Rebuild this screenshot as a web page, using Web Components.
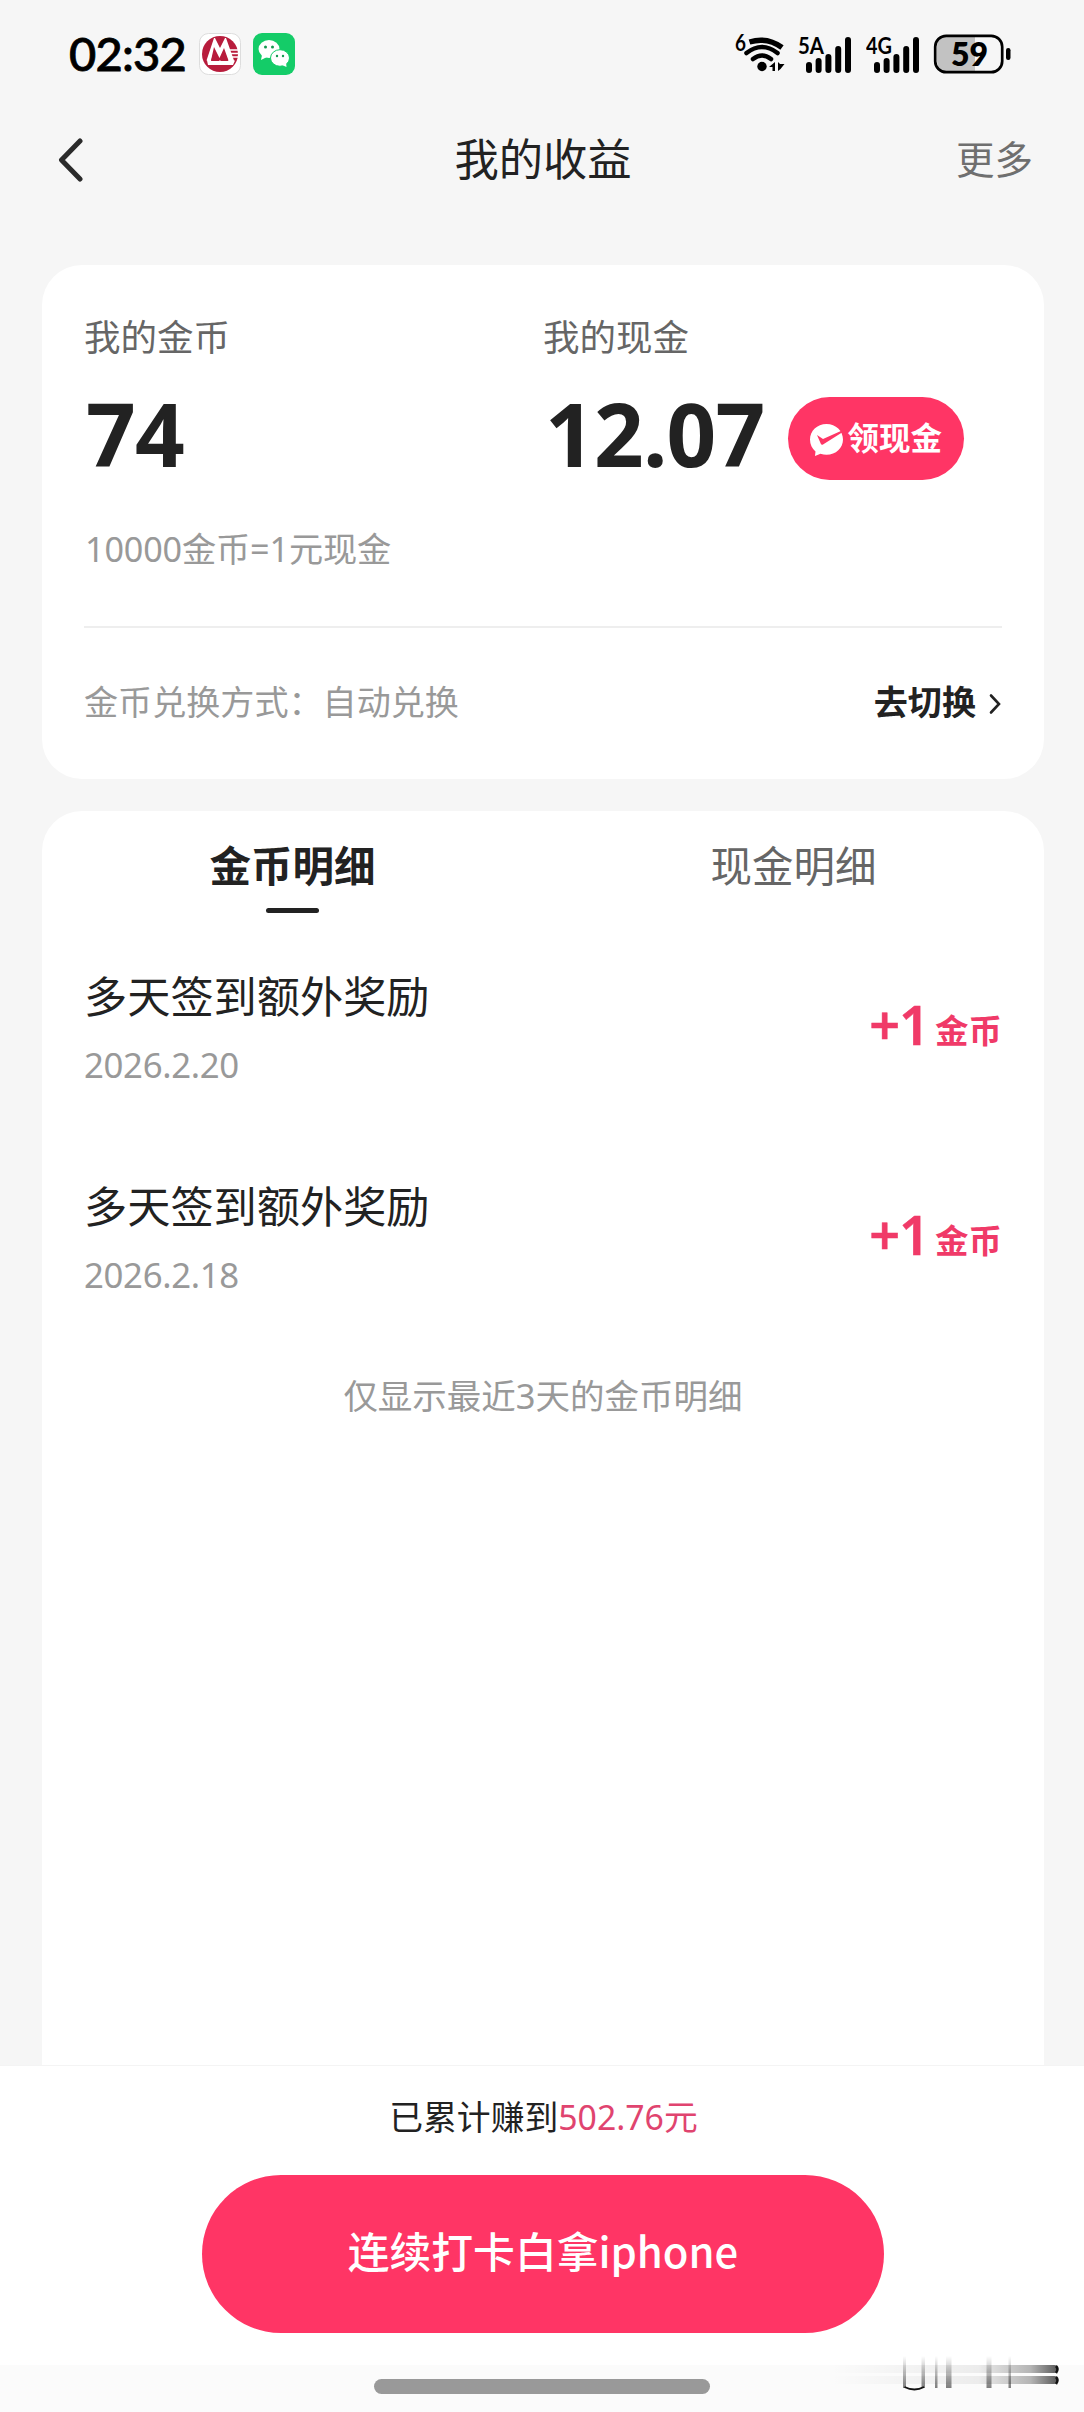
<!DOCTYPE html>
<html lang="zh-CN">
<head>
<meta charset="utf-8">
<title>我的收益</title>
<style>
  html, body { margin: 0; padding: 0; }
  body {
    width: 1084px;
    height: 2412px;
    overflow: hidden;
    background: #f6f6f6;
    color: #222;
    font-family: "Noto Sans", "Noto Sans CJK SC", sans-serif;
    --brand: #ff3565;
    --text-dim: #999;
  }
</style>
</head>
<body>
<earnings-page></earnings-page>

<script>
/** Small base: puts the element's template in an open shadow root. */
class BaseElement extends HTMLElement {
  constructor() {
    super();
    this.attachShadow({ mode: 'open' });
  }

  connectedCallback() {
    this.shadowRoot.innerHTML = this.template();
  }
}

/** SignalBars - network label with five rising bars. */
class SignalBars extends BaseElement {
  template() {
    const net = this.getAttribute('net') || '';
    return `
      <style>
        :host { display: block; width: 54px; height: 60px; }
        svg { display: block; }
        text { font: 700 23px Lato, sans-serif; }
      </style>
      <svg width="54" height="60" viewBox="0 -10 54 60">
        <text x="0" y="20" textLength="26" lengthAdjust="spacingAndGlyphs">${net}</text>
        <g stroke="#000" stroke-width="6" stroke-linecap="round">
          <path d="M11 31v5M20.6 27v9M30.4 23v13M40.2 15v21M50 6v30"/>
        </g>
      </svg>
    `;
  }
}

/** StatusBar - clock and notification icons left, radios and battery right. */
class StatusBar extends BaseElement {
  template() {
    return `
      <style>
        :host {
          display: flex;
          align-items: center;
          justify-content: space-between;
          height: 108px;
          padding: 0 71px 0 69px;
          box-sizing: border-box;
          color: #000;
        }
        .side { display: flex; align-items: center; }
        .time {
          font: 500 47px/60px Lato, sans-serif;
          width: 130px;
          margin-top: -3px;
          letter-spacing: -0.8px;
          white-space: nowrap;
          -webkit-text-stroke: 0.8px #000;
        }
        svg { display: block; }
        .wechat { margin-left: 12px; }
        .wifi { margin-right: 11px; }
        signal-bars + signal-bars { margin-left: 14px; }
        .battery { margin-left: 13px; }
        .wifi text { font: 700 22px Lato, sans-serif; }
        .battery text { font: 800 32px Lato, sans-serif; }
      </style>
      <div class="side">
        <span class="time">02:32</span>
        <svg width="42" height="42" viewBox="0 0 42 42">
          <rect x=".5" y=".5" width="41" height="41" rx="9" fill="#fff" stroke="#ddd"/>
          <circle cx="21" cy="21" r="18" fill="#b81c3c"/>
          <path d="M7.500 27.500L15 5h1l5 10 5-10h1l8 22.500h-5.500L25 15l-4.500 10L15 14l-3 13.500zM8 27.500h28l-2 4.500H9z" fill="#fff"/>
          <path d="M12 28l3.300-11 5 11zM21.500 28l3.700-10 4 10z" fill="#b81c3c"/>
          <path d="M31 17h8M32 20.500h7M33 24h6" stroke="#fff" stroke-width="1.300"/>
        </svg>
        <svg class="wechat" width="42" height="42" viewBox="0 0 42 42">
          <rect width="42" height="42" rx="9" fill="#14cc68"/>
          <ellipse cx="16" cy="16" rx="10.500" ry="9" fill="#fff"/>
          <path d="M9 22l-1 5 6-3z" fill="#fff"/>
          <ellipse cx="27" cy="25" rx="9.500" ry="8.300" fill="#fff" stroke="#14cc68" stroke-width="1"/>
          <path d="M29 32l4.500 2-.5-5z" fill="#fff"/>
          <g fill="#14994f"><circle cx="12.500" cy="14" r="1.500"/><circle cx="19.500" cy="14" r="1.500"/><circle cx="24" cy="23" r="1.200"/><circle cx="30" cy="23" r="1.200"/></g>
        </svg>
      </div>
      <div class="side">
        <svg class="wifi" width="52" height="60" viewBox="0 -10 52 60">
          <text x="0" y="17" textLength="11" lengthAdjust="spacingAndGlyphs">6</text>
          <g fill="none" stroke="#000" stroke-width="5">
            <path d="M14.500 8Q32 2.500 47 13.500" stroke-width="5.500"/>
            <path d="M11.500 19Q27 7 42.500 19" stroke-linecap="round" stroke-width="4.500"/>
            <path d="M18 25Q27 18 36 25" stroke-linecap="round" stroke-width="4.500"/>
          </g>
          <circle cx="27" cy="32.500" r="4.700"/>
          <path d="M40 28v9h-2.500v-4H34zM43 37v-9l2 2h4.500l-4 5z"/>
        </svg>
        <signal-bars net="5A"></signal-bars>
        <signal-bars net="4G"></signal-bars>
        <svg class="battery" width="80" height="40" viewBox="0 0 80 40">
          <path d="M13 3h29v34H13Q4 37 4 27V13Q4 3 13 3z" fill="#c2c2c2"/>
          <rect x="2.200" y="1.800" width="67" height="36.400" rx="11" fill="none" stroke="#000" stroke-width="2.700"/>
          <rect x="73" y="14" width="4.500" height="12" rx="2.200"/>
          <text x="18" y="32" textLength="37" lengthAdjust="spacingAndGlyphs">59</text>
        </svg>
      </div>
    `;
  }
}

/** PageHeader - back arrow, slotted title, right-hand action. */
class PageHeader extends BaseElement {
  template() {
    return `
      <style>
        :host {
          display: grid;
          grid-template-columns: 1fr auto 1fr;
          align-items: center;
          height: 104px;
          padding: 0 51px 0 53px;
        }
        svg { display: block; }
        .title { margin-top: -3px; font-size: 44.300px; line-height: 60px; }
        .action { justify-self: end; margin-top: -3px; font-size: 38.500px; line-height: 60px; color: #6f6f6f; }
      </style>
      <svg width="30" height="46" viewBox="0 0 30 46">
        <path d="M27 4L8.500 23 27 42" fill="none" stroke="#2b2b2b" stroke-width="5" stroke-linecap="round" stroke-linejoin="round"/>
      </svg>
      <span class="title"><slot></slot></span>
      <span class="action"><slot name="action"></slot></span>
    `;
  }
}

/** BalanceItem - caption above a large amount, with room for a button. */
class BalanceItem extends BaseElement {
  template() {
    return `
      <style>
        :host { display: block; }
        .label { font-size: 36.500px; line-height: 50px; color: #666; }
        .row { display: flex; align-items: center; height: 90px; margin-top: 31px; padding-left: 2px; }
        .value {
          font-size: 87px;
          font-weight: 700;
          line-height: 90px;
          letter-spacing: -0.8px;
          margin-top: -11px;
        }
      </style>
      <div class="label">${this.getAttribute('label')}</div>
      <div class="row">
        <span class="value">${this.getAttribute('value')}</span>
        <slot></slot>
      </div>
    `;
  }
}

/** WithdrawButton - pink pill with the tick bubble. */
class WithdrawButton extends BaseElement {
  template() {
    return `
      <style>
        :host {
          display: flex;
          align-items: center;
          box-sizing: border-box;
          width: 176px;
          height: 83px;
          margin-left: 23px;
          padding-left: 21px;
          gap: 4px;
          border-radius: 42px;
          background: var(--brand);
          color: #fff;
          font-size: 31.500px;
          font-weight: 700;
          line-height: 40px;
          white-space: nowrap;
        }
        svg { flex: none; margin-top: 4px; }
      </style>
      <svg width="35" height="34" viewBox="0 0 35 34">
        <path d="M17.500 1C8 1 1 8 1 16.500c0 5 2 9 5.500 12L6 33l5.500-2.300c2 .7 4 1 6 1C27 31.700 34 25 34 16.500S27 1 17.500 1z" fill="#fff"/>
        <path d="M8 12l6 4L33 7.500v2L14 21.500q-1.500.8-2.200-.8z" fill="#ff3565"/>
      </svg>
      <slot></slot>
    `;
  }
}

/** BalanceCard - coins, cash and the exchange mode. */
class BalanceCard extends BaseElement {
  template() {
    return `
      <style>
        :host {
          display: block;
          box-sizing: border-box;
          height: 514px;
          padding: 47px 42px 0;
          border-radius: 40px;
          background: #fff;
        }
        .balances { display: grid; grid-template-columns: 1fr 1fr; }
        .rate { margin: 41px 0 0 1px; font-size: 34.200px; line-height: 50px; letter-spacing: -0.15px; color: var(--text-dim); }
        .mode {
          display: flex;
          justify-content: space-between;
          align-items: center;
          height: 147px;
          margin-top: 52px;
          border-top: 2px solid #eee;
          font-size: 34.100px;
          line-height: 50px;
          color: var(--text-dim);
        }
        .switch { display: flex; align-items: center; gap: 10px; color: #222; font-weight: 700; }
        svg { display: block; margin-top: 4px; }
      </style>
      <div class="balances">
        <balance-item label="我的金币" value="74"></balance-item>
        <balance-item label="我的现金" value="12.07"><withdraw-button>领现金</withdraw-button></balance-item>
      </div>
      <div class="rate">10000金币=1元现金</div>
      <div class="mode">
        <span>金币兑换方式：自动兑换</span>
        <span class="switch">去切换
          <svg width="16" height="24" viewBox="0 0 16 24"><path d="M5 3.500l8 8.500-8 8.500" fill="none" stroke="#222" stroke-width="2.600" stroke-linecap="round"/></svg>
        </span>
      </div>
    `;
  }
}

/** RecordItem - one line of the coin history. */
class RecordItem extends BaseElement {
  template() {
    return `
      <style>
        :host { display: flex; justify-content: space-between; height: 209.500px; }
        .name { font-size: 43.200px; line-height: 60px; margin-top: 1px; }
        .date { margin-top: 13px; font-size: 34.800px; line-height: 50px; color: var(--text-dim); letter-spacing: -0.35px; }
        .amount {
          display: flex;
          height: 60px;
          margin-top: 28px;
          color: #f03a68;
          line-height: 60px;
        }
        .num { font-size: 54px; font-weight: 600; letter-spacing: -1px; -webkit-text-stroke: 0.5px #f03a68; }
        .unit { font-size: 33.500px; font-weight: 700; margin: 6px 0 0 6px; }
      </style>
      <div>
        <div class="name"><slot></slot></div>
        <div class="date">${this.getAttribute('date')}</div>
      </div>
      <div class="amount"><span class="num">${this.getAttribute('amount')}</span><span class="unit">金币</span></div>
    `;
  }
}

/** RecordCard - tabs above the slotted records. */
class RecordCard extends BaseElement {
  template() {
    return `
      <style>
        :host {
          display: block;
          box-sizing: border-box;
          height: 1254px;
          margin-top: 32px;
          border-radius: 40px 40px 0 0;
          background: #fff;
        }
        .tabs { display: grid; grid-template-columns: 1fr 1fr; height: 155px; text-align: center; }
        .tab { padding-top: 25px; font-size: 41.500px; line-height: 60px; color: #666; }
        .tab.active { color: #222; font-weight: 700; }
        .tab.active::after {
          content: "";
          display: block;
          width: 53px;
          height: 5px;
          margin: 12px auto 0;
          border-radius: 3px;
          background: #222;
        }
        .list { padding: 0 42px; }
        .note { text-align: center; font-size: 34.500px; line-height: 50px; color: var(--text-dim); margin-top: -14px; }
      </style>
      <div class="tabs">
        <div class="tab active">金币明细</div>
        <div class="tab">现金明细</div>
      </div>
      <div class="list"><slot></slot></div>
      <div class="note">仅显示最近3天的金币明细</div>
    `;
  }
}

/** BottomPanel - running total, main button and the home indicator. */
class BottomPanel extends BaseElement {
  template() {
    return `
      <style>
        :host {
          display: flex;
          flex-direction: column;
          align-items: center;
          position: relative;
          box-sizing: border-box;
          height: 347px;
          padding-top: 26px;
          border-top: 1px solid #f4f4f4;
          background: #fff;
        }
        .total { margin-left: 3px; font-size: 33.800px; line-height: 50px; }
        .total b { font-weight: 400; color: #e0446f; }
        button {
          width: 682px;
          height: 158px;
          margin: 33px 0 0 2px;
          padding: 0 0 9px;
          border: 0;
          border-radius: 79px;
          background: var(--brand);
          color: #fff;
          font: 500 41.800px/60px "Noto Sans CJK SC", sans-serif;
        }
        .nav { align-self: stretch; height: 47px; margin-top: 32px; background: #fbfbfb; }
        .nav i { display: block; width: 336px; height: 15px; margin: 14px auto 0; border-radius: 8px; background: #999; }
        .smudge { position: absolute; left: 830px; top: 286px; }
      </style>
      <div class="total">已累计赚到<b>502.76元</b></div>
      <button>连续打卡白拿iphone</button>
      <div class="nav"><i></i></div>
      <svg class="smudge" width="236" height="44" viewBox="0 0 236 44">
        <defs>
          <linearGradient id="h"><stop offset="0" stop-color="#000" stop-opacity="0"/><stop offset=".65" stop-color="#000" stop-opacity=".06"/><stop offset=".88" stop-color="#000" stop-opacity=".28"/><stop offset="1" stop-color="#000" stop-opacity=".65"/></linearGradient>
          <linearGradient id="v" x2="0" y2="1"><stop offset="0" stop-color="#000" stop-opacity="0"/><stop offset="1" stop-color="#000" stop-opacity=".5"/></linearGradient>
        </defs>
        <rect x="0" y="13" width="228" height="8" rx="4" fill="url(#h)"/>
        <rect x="0" y="24" width="228" height="8" rx="4" fill="url(#h)"/>
        <path d="M226 14q3 3 0 7M226 25q3 3 0 7" fill="none" stroke="#111" stroke-width="2.500"/>
        <g fill="url(#v)">
          <rect x="73" y="4" width="3" height="32"/><rect x="91.500" y="4" width="3.500" height="32"/>
          <rect x="105" y="4" width="2.500" height="32"/><rect x="116" y="4" width="5.500" height="32"/>
          <rect x="156.500" y="4" width="5" height="32"/><rect x="178.500" y="4" width="2.500" height="32"/>
        </g>
        <path d="M74.500 35q10 5 19.500 0" fill="none" stroke="#111" stroke-width="1.800"/>
      </svg>
    `;
  }
}

/** EarningsPage - the whole screen. */
class EarningsPage extends BaseElement {
  template() {
    return `
      <style>
        :host { display: flex; flex-direction: column; height: 2412px; }
        main { padding: 53px 40px 0 42px; }
      </style>
      <status-bar></status-bar>
      <page-header>我的收益<span slot="action">更多</span></page-header>
      <main>
        <balance-card></balance-card>
        <record-card>
          <record-item date="2026.2.20" amount="+1">多天签到额外奖励</record-item>
          <record-item date="2026.2.18" amount="+1">多天签到额外奖励</record-item>
        </record-card>
      </main>
      <bottom-panel></bottom-panel>
    `;
  }
}

customElements.define('signal-bars', SignalBars);
customElements.define('status-bar', StatusBar);
customElements.define('page-header', PageHeader);
customElements.define('balance-item', BalanceItem);
customElements.define('withdraw-button', WithdrawButton);
customElements.define('balance-card', BalanceCard);
customElements.define('record-item', RecordItem);
customElements.define('record-card', RecordCard);
customElements.define('bottom-panel', BottomPanel);
customElements.define('earnings-page', EarningsPage);
</script>
</body>
</html>
